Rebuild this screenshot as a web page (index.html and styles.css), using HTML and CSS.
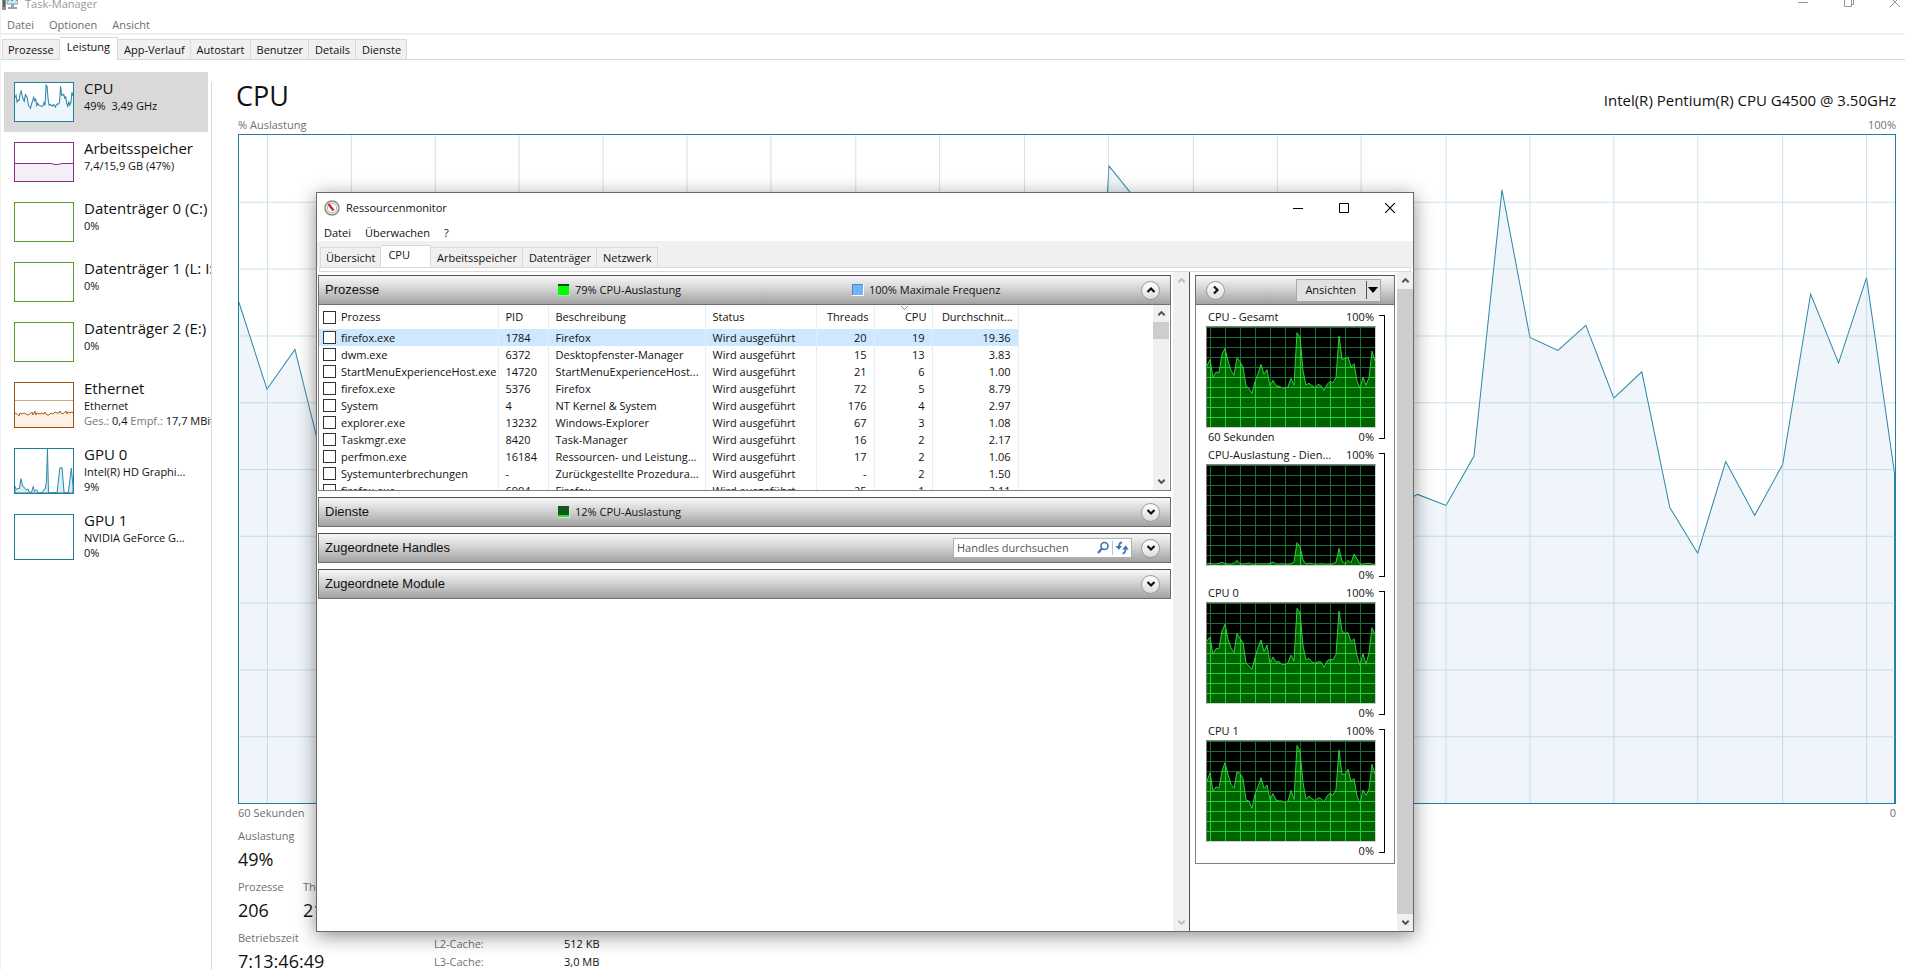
FILE: index.html
```html
<!DOCTYPE html>
<html lang="de">
<head>
<meta charset="utf-8">
<title>Task-Manager</title>
<link rel="stylesheet" href="styles.css">
</head>
<body>
<svg class="defs" width="0" height="0" aria-hidden="true">
  <defs>
    <pattern id="grid-off" x="9" y="0" width="45" height="30" patternUnits="userSpaceOnUse">
      <rect width="45" height="30" fill="#000"/><path d="M0 0h45v3H3v27H0z" fill="#1a6e30"/>
    </pattern>
    <pattern id="grid-on" x="9" y="0" width="45" height="30" patternUnits="userSpaceOnUse">
      <rect width="45" height="30" fill="#006400"/><path d="M0 0h45v3H3v27H0z" fill="#1fd233"/>
    </pattern>
    <symbol id="up" viewBox="0 0 10 10"><path d="M1.500 7L5 3.500 8.500 7" fill="none" stroke="currentColor" stroke-width="2.200"/></symbol>
    <symbol id="down" viewBox="0 0 10 10"><path d="M1.500 3L5 6.500 8.500 3" fill="none" stroke="currentColor" stroke-width="2.200"/></symbol>
    <symbol id="right" viewBox="0 0 10 10"><path d="M3 1.500L6.500 5 3 8.500" fill="none" stroke="currentColor" stroke-width="2.200"/></symbol>
  </defs>
</svg>

<div class="taskmgr">
  <header class="tm-title">
    <svg class="tm-icon" width="16" height="18" viewBox="0 0 16 18"><path d="M0 3h4v14H0z" fill="#8b9499"/><path d="M1 5h2v9H1z" fill="#4f6c5a"/><path d="M5 1h11v10H5z" fill="#c7e9f1" stroke="#8a9aa2"/><path d="M6 8l2-3 2 3 2-5 3 5" fill="none" stroke="#2a8fa8"/><path d="M9 11h3v3h3v2H6v-2h3z" fill="#9aa3a8"/></svg>
    <span>Task-Manager</span>
    <div class="tm-controls">
      <button aria-label="Minimieren"><svg width="10" height="12"><path d="M0 5.500h10" stroke="#999"/></svg></button>
      <button aria-label="Wiederherstellen"><svg width="10" height="12"><path d="M.5 2.500h7v7h-7zM2.500 2V0h7v7.500H8" fill="none" stroke="#999"/></svg></button>
      <button aria-label="Schließen"><svg width="10" height="12"><path d="M0 0l10 10M10 0L0 10" stroke="#999"/></svg></button>
    </div>
  </header>
  <nav class="tm-menu"><button>Datei</button><button>Optionen</button><button>Ansicht</button></nav>
  <div class="tm-tabs" role="tablist">
    <button role="tab">Prozesse</button><button role="tab" aria-selected="true">Leistung</button><button role="tab">App-Verlauf</button><button role="tab">Autostart</button><button role="tab">Benutzer</button><button role="tab">Details</button><button role="tab">Dienste</button>
  </div>

  <div class="tm-body">
    <nav class="side">
      <button class="item selected">
        <svg class="thumb cpu" data-thumb="total" viewBox="0 0 504 300" preserveAspectRatio="none"></svg>
        <span class="info"><b>CPU</b><span>49%&nbsp; 3,49 GHz</span></span>
      </button>
      <button class="item">
        <svg class="thumb mem" viewBox="0 0 58 38" preserveAspectRatio="none"><path d="M0 20.500h36l4 1h3l4-1h11V38H0z" fill="#f4eff7"/><path d="M0 20.500h36l4 1h3l4-1h11" fill="none" stroke="#8b2a90"/></svg>
        <span class="info"><b>Arbeitsspeicher</b><span>7,4/15,9 GB (47%)</span></span>
      </button>
      <button class="item"><svg class="thumb disk"></svg><span class="info"><b>Datenträger 0 (C:)</b><span>0%</span></span></button>
      <button class="item"><svg class="thumb disk"></svg><span class="info"><b>Datenträger 1 (L: I:)</b><span>0%</span></span></button>
      <button class="item"><svg class="thumb disk"></svg><span class="info"><b>Datenträger 2 (E:)</b><span>0%</span></span></button>
      <button class="item">
        <svg class="thumb tall net" viewBox="0 0 58 44" preserveAspectRatio="none"><path d="M0 30l2 1 2 2 1-3 2 1 2-1 2 1 2 1 2-1 2-2 1 3 2-4 1 4 1-2 3 1 2-1 2 1 1-2 2 3 2 0 2-2 2 1 2-2 2 1 2 0 1-2 2 3 2-1 2-2 1 3 1-2 2 1 2-1 1 1V44H0z" fill="#fdf1e6"/><path d="M0 17.500h58" stroke="#d0aa84"/><path d="M0 30l2 1 2 2 1-3 2 1 2-1 2 1 2 1 2-1 2-2 1 3 2-4 1 4 1-2 3 1 2-1 2 1 1-2 2 3 2 0 2-2 2 1 2-2 2 1 2 0 1-2 2 3 2-1 2-2 1 3 1-2 2 1 2-1 1 1" fill="none" stroke="#a95f22"/></svg>
        <span class="info"><b>Ethernet</b><span>Ethernet</span><span><i>Ges.:</i> 0,4 <i>Empf.:</i> 17,7 MBit/s</span></span>
      </button>
      <button class="item">
        <svg class="thumb tall cpu" viewBox="45 477 175 133" preserveAspectRatio="none"><path d="M45 590l5 10 5-5 3 3 5-31 5 23 4 2 6 8 6-2 4 10h7l5-18 4 15 6-5 5 9h13l4-9 4-2 4-23 3-98 3 132h26l8-74 7-2 6 76h13l9-74 5 55v20H45z" fill="#d9edf6" stroke="#2c86a8" stroke-width="3"/></svg>
        <span class="info"><b>GPU 0</b><span>Intel(R) HD Graphi...</span><span>9%</span></span>
      </button>
      <button class="item"><svg class="thumb tall cpu"></svg><span class="info"><b>GPU 1</b><span>NVIDIA GeForce G...</span><span>0%</span></span></button>
    </nav>

    <main class="perf">
      <div class="perf-head"><h1>CPU</h1><span>Intel(R) Pentium(R) CPU G4500 @ 3.50GHz</span></div>
      <div class="axis"><span>% Auslastung</span><span>100%</span></div>
      <div class="chart">
        <svg viewBox="238 134 1658 670" preserveAspectRatio="none">
          <path d="M238 302L266 389 294 349 322 462 350 540 378 510 406 420 434 470 462 500 490 560 518 590 546 560 574 480 602 400 630 450 658 430 686 520 714 500 742 540 770 545 798 550 826 555 854 550 882 545 910 500 938 540 966 560 1025 540 1053 520 1081 700 1109 165 1137 200 1165 400 1193 520 1221 510 1249 520 1277 530 1305 515 1333 520 1361 540 1390 510 1418 494.500 1446.500 505.500 1474.500 456 1502.500 189 1530.500 337 1558.500 350 1586.500 325 1614.500 398 1642.500 371.500 1670.500 507.500 1698.500 553.500 1726.500 461.500 1755.500 515.500 1783.500 464.500 1811.500 293.500 1839.500 362.500 1867.500 277 1895.500 473V806H236V302z" class="area"/>
          <path class="lines" d="M266.500 134v670M350.500 134v670M434.500 134v670M518.500 134v670M602.500 134v670M686.500 134v670M770.500 134v670M855.500 134v670M939.500 134v670M1024.500 134v670M1108.500 134v670M1193.500 134v670M1277.500 134v670M1361.500 134v670M1446.500 134v670M1530.500 134v670M1614.500 134v670M1698.500 134v670M1783.500 134v670M1867.500 134v670M238 201.500h1658M238 268.500h1658M238 335.500h1658M238 402.500h1658M238 469.500h1658M238 536.500h1658M238 603.500h1658M238 670.500h1658M238 737.500h1658"/>
        </svg>
      </div>
      <div class="axis"><span>60 Sekunden</span><span>0</span></div>
      <div class="stats">
        <dl class="counters">
          <div><dt>Auslastung</dt><dd>49%</dd></div>
          <div class="pair"><div><dt>Prozesse</dt><dd>206</dd></div><div><dt>Threads</dt><dd>2143</dd></div></div>
          <div><dt>Betriebszeit</dt><dd>7:13:46:49</dd></div>
        </dl>
        <dl class="caches"><dt>L2-Cache:</dt><dd>512 KB</dd><dt>L3-Cache:</dt><dd>3,0 MB</dd></dl>
      </div>
    </main>
  </div>
</div>

<section class="window" aria-label="Ressourcenmonitor">
  <header class="w-title">
    <svg width="16" height="16" viewBox="0 0 16 16"><circle cx="8" cy="8" r="7" fill="#f1f1ea" stroke="#8c8c80" stroke-width="1.500"/><circle cx="8" cy="8" r="4.800" fill="#fff" stroke="#b5b5a8"/><path d="M4.500 4l5 6.500" stroke="#c81e32" stroke-width="2.200"/></svg>
    <span>Ressourcenmonitor</span>
    <div class="w-controls">
      <button aria-label="Minimieren"><svg width="10" height="10"><path d="M0 5.500h10" stroke="#000"/></svg></button>
      <button aria-label="Maximieren"><svg width="10" height="10"><path d="M.5.5h9v9h-9z" fill="none" stroke="#000"/></svg></button>
      <button aria-label="Schließen"><svg width="10" height="10"><path d="M0 0l10 10M10 0L0 10" stroke="#000" stroke-width="1.200"/></svg></button>
    </div>
  </header>
  <nav class="w-menu"><button>Datei</button><button>Überwachen</button><button>?</button></nav>
  <div class="w-tabs" role="tablist">
    <button role="tab">Übersicht</button><button role="tab" aria-selected="true">CPU</button><button role="tab">Arbeitsspeicher</button><button role="tab">Datenträger</button><button role="tab">Netzwerk</button>
  </div>
  <div class="w-strip"></div>

  <div class="w-body">
    <div class="panels">
      <section class="panel">
        <header class="bar">
          <h2>Prozesse</h2>
          <span class="metric"><svg width="12" height="12"><path d="M0 0h12v12H0z" fill="#b9d9b9"/><path d="M0 0h11v11H0z" fill="#0f0"/><path d="M0 0h11v2H0z" fill="#0a4a12"/></svg>79% CPU-Auslastung</span>
          <span class="metric"><svg width="12" height="12"><path d="M0 0h12v12H0z" fill="#fff"/><path d="M0 0h11v11H0z" fill="#4c86c6"/><path d="M1 1h10v10H1z" fill="#73b4f8"/></svg>100% Maximale Frequenz</span>
          <button class="round" aria-label="Prozesse reduzieren"><svg><use href="#up"/></svg></button>
        </header>
        <div class="list">
          <div class="list-view">
          <table>
            <colgroup><col class="c-name"><col class="c-pid"><col class="c-desc"><col class="c-stat"><col class="c-num"><col class="c-num"><col class="c-avg"></colgroup>
            <thead><tr><th><label><input type="checkbox">Prozess</label></th><th>PID</th><th>Beschreibung</th><th>Status</th><th>Threads</th><th class="sorted">CPU<svg width="7" height="4"><path d="M0 0l3.500 3.500L7 0" fill="none" stroke="#888"/></svg></th><th>Durchschnit...</th></tr></thead>
            <tbody>
              <tr class="hot"><td><label><input type="checkbox">firefox.exe</label></td><td>1784</td><td>Firefox</td><td>Wird ausgeführt</td><td>20</td><td>19</td><td>19.36</td></tr>
              <tr><td><label><input type="checkbox">dwm.exe</label></td><td>6372</td><td>Desktopfenster-Manager</td><td>Wird ausgeführt</td><td>15</td><td>13</td><td>3.83</td></tr>
              <tr><td><label><input type="checkbox">StartMenuExperienceHost.exe</label></td><td>14720</td><td>StartMenuExperienceHost...</td><td>Wird ausgeführt</td><td>21</td><td>6</td><td>1.00</td></tr>
              <tr><td><label><input type="checkbox">firefox.exe</label></td><td>5376</td><td>Firefox</td><td>Wird ausgeführt</td><td>72</td><td>5</td><td>8.79</td></tr>
              <tr><td><label><input type="checkbox">System</label></td><td>4</td><td>NT Kernel &amp; System</td><td>Wird ausgeführt</td><td>176</td><td>4</td><td>2.97</td></tr>
              <tr><td><label><input type="checkbox">explorer.exe</label></td><td>13232</td><td>Windows-Explorer</td><td>Wird ausgeführt</td><td>67</td><td>3</td><td>1.08</td></tr>
              <tr><td><label><input type="checkbox">Taskmgr.exe</label></td><td>8420</td><td>Task-Manager</td><td>Wird ausgeführt</td><td>16</td><td>2</td><td>2.17</td></tr>
              <tr><td><label><input type="checkbox">perfmon.exe</label></td><td>16184</td><td>Ressourcen- und Leistung...</td><td>Wird ausgeführt</td><td>17</td><td>2</td><td>1.06</td></tr>
              <tr><td><label><input type="checkbox">Systemunterbrechungen</label></td><td>-</td><td>Zurückgestellte Prozedura...</td><td>Wird ausgeführt</td><td>-</td><td>2</td><td>1.50</td></tr>
              <tr><td><label><input type="checkbox">firefox.exe</label></td><td>6904</td><td>Firefox</td><td>Wird ausgeführt</td><td>25</td><td>1</td><td>2.11</td></tr>
            </tbody>
          </table>
          </div>
          <div class="scroll"><button aria-label="Nach oben"><svg><use href="#up"/></svg></button><i class="knob"></i><button aria-label="Nach unten"><svg><use href="#down"/></svg></button></div>
        </div>
      </section>
      <section class="panel"><header class="bar">
        <h2>Dienste</h2>
        <span class="metric"><svg width="12" height="12"><path d="M0 0h12v12H0z" fill="#c9e9c9"/><path d="M0 0h11v11H0z" fill="#125a1c"/><path d="M0 9h11v2H0z" fill="#2fe02f"/></svg>12% CPU-Auslastung</span>
        <button class="round" aria-label="Dienste erweitern"><svg><use href="#down"/></svg></button>
      </header></section>
      <section class="panel"><header class="bar">
        <h2>Zugeordnete Handles</h2>
        <div class="search">
          <input type="text" placeholder="Handles durchsuchen" aria-label="Handles durchsuchen">
          <button aria-label="Suchen"><svg width="14" height="14" viewBox="0 0 14 14"><circle cx="8.500" cy="5" r="3.500" fill="none" stroke="#3f74b4" stroke-width="1.600"/><path d="M6 7.500L2 12" stroke="#3f74b4" stroke-width="2.200"/></svg></button>
          <button class="again" aria-label="Aktualisieren"><svg width="14" height="14" viewBox="0 0 14 14"><path d="M7 1.500Q4 1.500 4 6M7.500 12.500Q10.500 12.500 10.500 8" fill="none" stroke="#3f7cc0" stroke-width="1.800"/><path d="M.5 5h6.500L3.800 8.800zM7.300 8.500h6.500l-3.200-4z" fill="#3a6fb0"/></svg></button>
        </div>
        <button class="round" aria-label="Handles erweitern"><svg><use href="#down"/></svg></button>
      </header></section>
      <section class="panel"><header class="bar">
        <h2>Zugeordnete Module</h2>
        <button class="round" aria-label="Module erweitern"><svg><use href="#down"/></svg></button>
      </header></section>
    </div>
    <div class="scroll idle"><button aria-label="Nach oben"><svg><use href="#up"/></svg></button><button aria-label="Nach unten"><svg><use href="#down"/></svg></button></div>

    <aside class="graphs">
      <div class="graph-box">
        <header class="bar">
          <button class="round" aria-label="Bereich ausblenden"><svg><use href="#right"/></svg></button>
          <button class="views"><span>Ansichten</span><svg width="14" height="18"><path d="M.5 0v18" stroke="#555"/><path d="M2 6h10l-5 6z"/></svg></button>
        </header>
        <div class="graph"><div class="plot"><p><span>CPU - Gesamt</span><span>100%</span></p><svg data-graph="total" viewBox="0 0 504 300" preserveAspectRatio="none"></svg><p><span>60 Sekunden</span><span>0%</span></p></div><i class="bracket"></i></div>
        <div class="graph"><div class="plot"><p><span>CPU-Auslastung - Dien...</span><span>100%</span></p><svg data-graph="services" viewBox="0 0 504 300" preserveAspectRatio="none"></svg><p><span></span><span>0%</span></p></div><i class="bracket"></i></div>
        <div class="graph"><div class="plot"><p><span>CPU 0</span><span>100%</span></p><svg data-graph="cpu0" viewBox="0 0 504 300" preserveAspectRatio="none"></svg><p><span></span><span>0%</span></p></div><i class="bracket"></i></div>
        <div class="graph"><div class="plot"><p><span>CPU 1</span><span>100%</span></p><svg data-graph="cpu1" viewBox="0 0 504 300" preserveAspectRatio="none"></svg><p><span></span><span>0%</span></p></div><i class="bracket"></i></div>
      </div>
    </aside>
    <div class="scroll side-scroll"><button aria-label="Nach oben"><svg><use href="#up"/></svg></button><i class="knob"></i><button aria-label="Nach unten"><svg><use href="#down"/></svg></button></div>
  </div>
</section>
<script src="charts.js"></script>
</body>
</html>
```

FILE: styles.css
```css
* { box-sizing: border-box; }
html, body { height: 100%; }
body {
  margin: 0;
  overflow: hidden;
  background: #fff;
  color: #111;
  font: 11px/16px "Open Sans", "Noto Sans", sans-serif;
}
button { margin: 0; padding: 0; border: 0; background: none; color: inherit; font: inherit; text-align: left; }
h1, h2, p, dl, dd { margin: 0; font-weight: normal; }
svg { display: block; flex: none; }
i { font-style: normal; }
.defs { position: absolute; }

/* Task-Manager */
.taskmgr { display: flex; flex-direction: column; height: 100vh; overflow: hidden; border-left: 1px solid #f0f0f0; }
.tm-title { display: flex; gap: 7px; height: 13px; padding-left: 1px; line-height: 8px; color: #999; }
.tm-icon { margin-top: -7px; }
.tm-controls { display: flex; gap: 36px; margin-left: auto; padding-right: 5px; }
.tm-controls button { margin-top: -3px; height: 12px; }
.tm-menu { display: flex; gap: 15px; height: 22px; padding: 3px 6px 0; border-bottom: 2px solid #f0f0f0; color: #6d6d6d; }
.tm-tabs { display: flex; align-items: flex-end; height: 25px; padding-left: 1px; border-bottom: 1px solid #d9d9d9; }
.tm-tabs button, .w-tabs button {
  height: 20px;
  padding: 0 5px 0 6px;
  border: 1px solid #d9d9d9;
  border-width: 1px 1px 0 0;
  background: #f0f0f0;
}
.tm-tabs button:first-child, .w-tabs button:first-child { padding-left: 5px; border-left-width: 1px; }
.tm-tabs button[aria-selected], .w-tabs button[aria-selected] { height: 23px; margin-bottom: -1px; padding: 0 7px 4px; background: #fff; }
.tm-body { display: flex; flex: 1; min-height: 0; }

.side { flex: none; width: 210px; padding: 12px 0 0 3px; overflow: hidden; }
.item { display: flex; gap: 10px; width: 204px; padding: 0 10px; white-space: nowrap; }
.item.selected { background: #d9d9d9; }
.thumb { width: 60px; height: 40px; margin: 10px 0; border: 1px solid; background: #fff; }
.thumb.tall { height: 46px; }
.thumb.cpu { border-color: #1f7f9f; }
.thumb.mem { border-color: #8b2a90; }
.thumb.disk { border-color: #5c9a2a; }
.thumb.net { border-color: #9c5312; }
.info { display: flex; flex-direction: column; padding-top: 6px; line-height: 15px; }
.info b { font-size: 15px; font-weight: normal; line-height: 20px; }
.info i { color: #767676; }

.perf { display: flex; flex: 1; flex-direction: column; margin-top: 22px; padding: 0 9px 0 26px; border-left: 1px solid #d9d9d9; }
.perf-head { display: flex; align-items: baseline; justify-content: space-between; height: 34px; font-size: 15px; }
.perf-head h1 { margin-left: -2px; font-size: 27px; line-height: 28px; }
.axis { display: flex; justify-content: space-between; line-height: 18px; color: #707070; }
.chart { flex: 1; min-height: 0; border: 1px solid #1f7f9f; }
.chart svg { width: 100%; height: 100%; overflow: hidden; }
.area { fill: #eff5fa; stroke: #2c86a8; vector-effect: non-scaling-stroke; }
.lines { fill: none; stroke: #8fc0d8; stroke-opacity: .45; vector-effect: non-scaling-stroke; }
.stats { display: flex; margin: 6px 0 -6px; }
.counters { display: flex; flex-direction: column; gap: 5px; width: 196px; }
.counters dt { color: #707070; }
.counters dd { font-size: 18px; line-height: 30px; }
.pair { display: grid; grid-template-columns: 65px 1fr; }
.caches { display: grid; grid-template-columns: 130px auto; align-content: end; padding-bottom: 5px; line-height: 18px; }
.caches dt { color: #707070; }

/* Ressourcenmonitor */
.window {
  position: absolute;
  inset: 192px 491px 38px 316px;
  display: flex;
  flex-direction: column;
  border: 1px solid #6a6a6a;
  background: #fff;
  box-shadow: 0 4px 18px rgba(0, 0, 0, .45);
}
.w-title { display: flex; align-items: center; gap: 6px; height: 29px; padding-left: 7px; }
.w-controls { display: flex; gap: 36px; margin-left: auto; padding-right: 18px; }
.w-menu { display: flex; gap: 14px; height: 19px; padding: 2px 7px 0; }
.w-tabs { display: flex; align-items: flex-end; height: 26px; padding-left: 3px; background: #f0f0f0; }
.w-tabs button[aria-selected] { padding-right: 20px; height: 22px; margin-bottom: 0; }
.w-strip { height: 5px; margin: 0 2px; border: 1px solid #d9d9d9; background: #fff; }
.w-body { display: flex; flex: 1; min-height: 0; }
.panels { display: flex; flex: 1; flex-direction: column; gap: 6px; min-width: 0; padding: 3px 2px 0 1px; }
.bar {
  display: flex;
  align-items: center;
  height: 30px;
  padding: 0 10px 0 6px;
  border: 1px solid #6f6f6f;
  border-top-color: #505050;
  background: linear-gradient(#f8f8f8, #d4d4d4 45%, #a2a2a2);
}
.bar h2 { flex: none; width: 233px; font: 13px/16px "Liberation Sans", Arial, sans-serif; }
.metric { display: flex; flex: none; align-items: center; gap: 5px; width: 294px; }
.metric + .metric { width: auto; }
.round {
  display: grid;
  place-items: center;
  width: 19px;
  height: 19px;
  margin-left: auto;
  border: 1px solid #999;
  border-radius: 50%;
  background: linear-gradient(#fff, #dedede);
}
.round svg { width: 10px; height: 10px; }
.list { display: flex; height: 186px; border: 1px solid #808080; border-top: 0; }
.list-view { flex: 1; min-width: 0; overflow: hidden; }
table { border-collapse: collapse; table-layout: fixed; width: 699px; }
.c-name { width: 179px; } .c-pid { width: 50px; } .c-desc { width: 157px; } .c-stat { width: 111px; }
.c-num { width: 58px; } .c-avg { width: 86px; }
th, td { height: 17px; padding: 0 7px; border-right: 1px solid #e3eef6; line-height: 16px; font-weight: normal; text-align: left; white-space: nowrap; }
th { position: relative; height: 24px; padding-right: 5px; }
th:first-child, td:first-child { padding: 0 0 0 4px; }
th:nth-child(n+5), td:nth-child(n+5) { padding-left: 0; text-align: right; }
.sorted svg { position: absolute; top: 1px; left: 26px; }
.hot { background: #cde8ff; }
label { display: flex; align-items: center; gap: 5px; }
input[type="checkbox"] { appearance: none; flex: none; width: 13px; height: 13px; margin: 0; border: 1px solid #333; background: #fff; }

.scroll { display: flex; flex: none; flex-direction: column; justify-content: space-between; width: 16px; background: #f0f0f0; color: #505050; }
.scroll button { display: grid; place-items: center; width: 100%; height: 17px; }
.scroll button svg { width: 9px; height: 9px; }
.scroll .knob { height: 17px; margin-bottom: auto; background: #cdcdcd; }
.scroll.idle { color: #bdbdbd; }
.scroll.side-scroll .knob { flex: 1; }
.list .scroll { margin-right: 1px; }

.search { display: flex; align-items: center; width: 179px; height: 20px; margin: 0 9px 0 auto; border: 1px solid #b0b0b0; background: #fff; }
.search + .round { margin-left: 0; }
.search input { flex: 1; min-width: 0; height: 16px; padding: 0 3px; border: 0; background: none; color: #555; font: inherit; }
.search input::placeholder { color: #555; opacity: 1; }
.search button { padding: 0 2px; }
.search .again { border-left: 1px solid #b0c8e0; }

.graphs { flex: none; width: 208px; padding: 3px 2px 0 5px; border-left: 1px solid #505050; }
.graph-box { padding-bottom: 3px; border: 1px solid #808080; border-top: 0; }
.graph-box .bar { margin: 0 -1px 3px; padding: 0 13px 0 10px; }
.graph-box .round { margin: 0; }
.views { display: flex; align-items: center; gap: 10px; height: 23px; margin-left: auto; padding: 0 0 0 8px; border: 1px solid #a8a8a8; background: #e1e1e1; }
.graph { display: flex; gap: 3px; padding-left: 10px; }
.plot { width: 170px; }
.plot p { display: flex; justify-content: space-between; padding: 0 2px; line-height: 18px; white-space: nowrap; }
.plot svg { width: 170px; height: 102px; border: 1px solid; border-color: #808080 #d0d0d0 #d0d0d0 #808080; }
.bracket { width: 6px; margin: 7px 0; border: 1px solid #000; border-left: 0; }
```

FILE: charts.js
```js
const series = {
  total: [117,97,150,135,137,82,64,102,130,145,92,104,120,177,184,200,164,140,112,142,128,177,160,176,178,182,183,180,154,175,17,30,132,174,169,176,182,172,176,190,172,164,167,152,27,97,94,90,120,110,162,184,150,175,152,72,102],
  services: [297,294,297,297,295,292,296,297,297,295,286,296,297,296,294,297,297,296,297,296,297,295,291,297,297,296,297,297,296,292,233,245,285,297,294,296,297,297,296,297,297,297,296,292,250,288,296,286,294,267,282,297,297,296,295,297,298],
  cpu0: [114,102,154,137,137,84,64,109,134,149,92,106,119,179,189,199,164,134,111,146,126,181,162,177,176,184,184,179,156,174,16,29,129,171,166,177,181,176,177,193,174,169,171,154,24,84,91,89,116,107,159,187,152,184,149,74,94],
  cpu1: [120,95,150,137,142,90,65,100,130,142,93,97,113,177,180,202,160,137,110,142,132,175,158,177,180,180,185,180,148,175,13,30,125,175,165,173,179,170,173,183,165,157,163,145,27,100,100,85,120,113,165,187,147,163,145,70,100]
};

const points = (ys) => ys.map((y, i) => `${i * 9},${y}`).join(" ");

document.querySelectorAll("[data-graph]").forEach((svg) => {
  const line = points(series[svg.dataset.graph]);
  svg.innerHTML =
    `<rect width="504" height="300" fill="url(#grid-off)"/>` +
    `<polygon points="0,300 ${line} 504,300" fill="url(#grid-on)"/>` +
    `<polyline points="${line}" fill="none" stroke="#35c93f" stroke-width="3"/>`;
});

document.querySelectorAll("[data-thumb]").forEach((svg) => {
  const line = points(series[svg.dataset.thumb]);
  svg.innerHTML =
    `<polygon points="0,300 ${line} 504,300" fill="#eef6fb"/>` +
    `<polyline points="${line}" fill="none" stroke="#2c86a8" stroke-width="9"/>`;
});
```
